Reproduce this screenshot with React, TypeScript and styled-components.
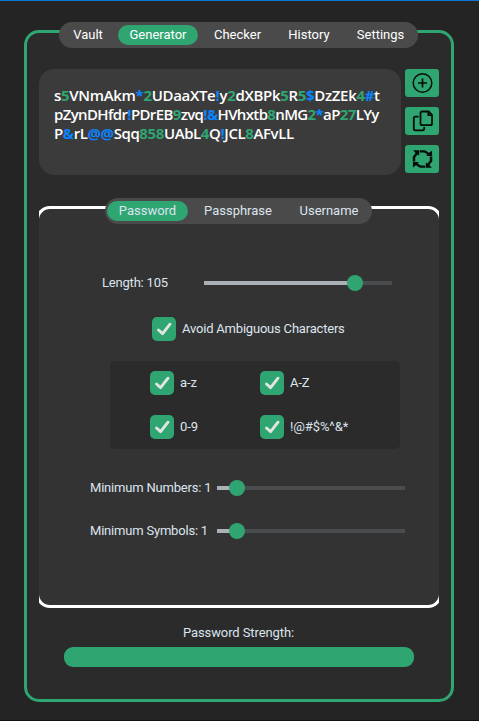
import React from "react";
import styled, { createGlobalStyle } from "styled-components";

const GREEN = "#2fa572";
const BLUE = "#0a84ff";

const GlobalStyle = createGlobalStyle`
  * { box-sizing: border-box; }
  body { margin: 0; background: #242424; }
`;

const Window = styled.main`
  width: 479px;
  height: 721px;
  padding: 21px 25px 18px 24px;
  border-top: 1px solid #0a78d4;
  border-bottom: 1px solid #101010;
  background: #242424;
  color: #dce4ee;
  font: 13px/16px Roboto, sans-serif;
`;

const Frame = styled.section`
  height: 672px;
  margin-top: 8px;
  padding: 0 12px;
  border: 3px solid ${GREEN};
  border-radius: 15px;
  background: #2b2b2b;
  display: flex;
  flex-direction: column;
`;

const TabBar = styled.nav<{ $width: number; $lift: number }>`
  display: flex;
  justify-content: center;
  gap: 4px;
  flex: none;
  align-self: flex-start;
  position: relative;
  width: ${(p) => p.$width}px;
  height: 26px;
  margin-top: -${(p) => p.$lift}px;
  padding: 3px 0;
  border-radius: 13px;
  background: #4a4a4a;
`;

const Tab = styled.button<{ $active?: boolean; $width: number }>`
  width: ${(p) => p.$width}px;
  height: 20px;
  padding: 0;
  border: 0;
  border-radius: 10px;
  background: ${(p) => (p.$active ? GREEN : "transparent")};
  color: inherit;
  font: inherit;
  line-height: 20px;
  white-space: nowrap;
`;

const MainTabs = styled(TabBar)`
  margin-left: 20px;
  padding-left: 1px;
  color: #fff;
`;

const OutputRow = styled.div`
  display: flex;
  gap: 4px;
  margin-top: 21px;
  height: 106px;
`;

const Output = styled.div`
  width: 362px;
  padding: 17px 15px;
  border-radius: 15px;
  background: #3b3b3b;
  color: #fff;
  font: 600 15px/19px "Open Sans", sans-serif;
`;

const OutputLine = styled.div<{ $spacing: number }>`
  white-space: nowrap;
  letter-spacing: ${(p) => p.$spacing}px;
`;

const Digit = styled.span`
  color: ${GREEN};
  font-weight: 700;
`;

const Special = styled.span`
  color: ${BLUE};
  font-weight: 700;
`;

const Actions = styled.div`
  display: flex;
  flex-direction: column;
  gap: 10px;
`;

const ActionButton = styled.button`
  display: grid;
  place-items: center;
  width: 34px;
  height: 28px;
  padding: 0;
  border: 0;
  border-radius: 3px;
  background: ${GREEN};
  color: #080d0a;
`;

const PanelClip = styled.div`
  width: 400px;
  height: 402px;
  margin-top: 31px;
  overflow: hidden;
  flex: none;
`;

const Panel = styled.div`
  height: 402px;
  margin: 0 -3px;
  padding-top: 62px;
  border: 3px solid #fff;
  border-radius: 14px;
  background: #333;
  display: flex;
  flex-direction: column;
`;

const PanelTabs = styled(TabBar)`
  margin-left: 66px;
`;

const Setting = styled.div<{ $indent: number; $label: number; $top?: number }>`
  display: grid;
  grid-template-columns: ${(p) => p.$label}px 188px;
  align-items: center;
  height: 24px;
  margin-left: ${(p) => p.$indent}px;
  margin-top: ${(p) => p.$top ?? 0}px;
  white-space: nowrap;
  letter-spacing: -0.2px;
`;

const Track = styled.div<{ $value: number }>`
  height: 4px;
  display: flex;
  align-items: center;
  background: linear-gradient(to right, #aab0b5 ${(p) => p.$value}px, #4a4d50 ${(p) => p.$value}px);
`;

const Thumb = styled.span<{ $value: number }>`
  flex: none;
  width: 16px;
  height: 16px;
  margin-left: ${(p) => p.$value - 8}px;
  border-radius: 50%;
  background: ${GREEN};
`;

const AmbiguousRow = styled.div`
  margin: 22px 0 0 113px;
  letter-spacing: -0.2px;
`;

const CheckLabel = styled.label`
  display: flex;
  align-items: center;
  gap: 6px;
  height: 24px;
  white-space: nowrap;
`;

const CheckBox = styled.span`
  display: grid;
  place-items: center;
  width: 24px;
  height: 24px;
  border-radius: 5px;
  background: ${GREEN};
`;

const CharacterSets = styled.div`
  display: grid;
  grid-template-columns: 110px 130px;
  row-gap: 20px;
  width: 290px;
  height: 88px;
  margin: 20px 0 0 71px;
  padding: 10px 10px 10px 40px;
  border-radius: 5px;
  background: #2b2b2b;
  letter-spacing: -0.1px;
`;

const StrengthLabel = styled.div`
  margin-top: 401px;
  padding-right: 1px;
  text-align: center;
  letter-spacing: -0.1px;
`;

const StrengthBar = styled.div`
  width: 350px;
  height: 20px;
  margin: 6px 0 0 25px;
  border-radius: 9px;
  background: ${GREEN};
`;

const passwordLines = [
  { text: "s5VNmAkm*2UDaaXTe!y2dXBPk5R5$DzZEk4#t", spacing: -0.32 },
  { text: "pZynDHfdr!PDrEB9zvq!&HVhxtb8nMG2*aP27LYy", spacing: -0.64 },
  { text: "P&rL@@Sqq858UAbL4Q!JCL8AFvLL", spacing: -0.4 },
];

function PasswordText({ text }: { text: string }) {
  return (
    <>
      {(text.match(/[A-Za-z]+|[0-9]+|[^A-Za-z0-9]+/g) ?? []).map((part, i) =>
        /^[0-9]/.test(part) ? (
          <Digit key={i}>{part}</Digit>
        ) : /^[A-Za-z]/.test(part) ? (
          part
        ) : (
          <Special key={i}>{part}</Special>
        )
      )}
    </>
  );
}

function Check({ label }: { label: string }) {
  return (
    <CheckLabel>
      <CheckBox>
        <svg width="24" height="24" viewBox="0 0 24 24" fill="none">
          <path d="M6.5 13 10.6 16.6 18 7.2" stroke="#e2e6e3" strokeWidth="2.9" strokeLinecap="round" strokeLinejoin="round" />
        </svg>
      </CheckBox>
      {label}
    </CheckLabel>
  );
}

function Slider({ value }: { value: number }) {
  return (
    <Track $value={value}>
      <Thumb $value={value} />
    </Track>
  );
}

function AddIcon() {
  return (
    <svg width="22" height="22" viewBox="0 0 22 22" fill="none" stroke="currentColor">
      <circle cx="11.5" cy="11" r="9.3" strokeWidth="1.5" />
      <path d="M11.5 6.5v9M7 11h9" strokeWidth="1.7" />
    </svg>
  );
}

function CopyIcon() {
  return (
    <svg width="24" height="24" viewBox="0 0 24 24" fill="none" stroke="currentColor" strokeWidth="1.8" strokeLinejoin="round">
      <path d="M12.2 2.5h6.4l3.4 3.4v8.6q0 1.7-1.7 1.7h-8.1q-1.7 0-1.7-1.7V4.2q0-1.7 1.7-1.7z" />
      <path d="M18.3 2.5v3.7H22" />
      <path d="M8.6 7.6H5.4Q3.8 7.6 3.8 9.2v10.5q0 1.6 1.6 1.6h7.1q1.7 0 1.7-1.7V18" />
    </svg>
  );
}

function RegenerateIcon() {
  return (
    <svg width="22" height="20" viewBox="0 0 22 20" fill="currentColor">
      {[0, 90, 180, 270].map((angle) => (
        <g key={angle} transform={`translate(11.5 10) scale(1.04 0.94) rotate(${angle})`}>
          <path d="M-2.7-9.4H2.4L6.3-6.7 9.2-9V-3.2H3.6L4.7-4.8 1.6-7H-2.7z" />
        </g>
      ))}
    </svg>
  );
}

export default function App() {
  return (
    <>
      <GlobalStyle />
      <Window>
        <Frame>
          <MainTabs $width={359} $lift={11}>
            <Tab $width={52}>Vault</Tab>
            <Tab $width={80} $active>Generator</Tab>
            <Tab $width={71}>Checker</Tab>
            <Tab $width={64}>History</Tab>
            <Tab $width={71}>Settings</Tab>
          </MainTabs>
          <OutputRow>
            <Output>
              {passwordLines.map((line) => (
                <OutputLine key={line.text} $spacing={line.spacing}>
                  <PasswordText text={line.text} />
                </OutputLine>
              ))}
            </Output>
            <Actions>
              <ActionButton aria-label="Add"><AddIcon /></ActionButton>
              <ActionButton aria-label="Copy"><CopyIcon /></ActionButton>
              <ActionButton aria-label="Regenerate"><RegenerateIcon /></ActionButton>
            </Actions>
          </OutputRow>
          <PanelClip>
            <Panel>
              <Setting $indent={63} $label={102}>
                <span>Length: 105</span>
                <Slider value={151} />
              </Setting>
              <AmbiguousRow><Check label="Avoid Ambiguous Characters" /></AmbiguousRow>
              <CharacterSets>
                <Check label="a-z" />
                <Check label="A-Z" />
                <Check label="0-9" />
                <Check label="!@#$%^&*" />
              </CharacterSets>
              <Setting $indent={51} $label={127} $top={27}>
                <span>Minimum Numbers: 1</span>
                <Slider value={20} />
              </Setting>
              <Setting $indent={51} $label={127} $top={19}>
                <span>Minimum Symbols: 1</span>
                <Slider value={20} />
              </Setting>
            </Panel>
          </PanelClip>
          <PanelTabs $width={267} $lift={410}>
            <Tab $width={81} $active>Password</Tab>
            <Tab $width={92}>Passphrase</Tab>
            <Tab $width={82}>Username</Tab>
          </PanelTabs>
          <StrengthLabel>Password Strength:</StrengthLabel>
          <StrengthBar />
        </Frame>
      </Window>
    </>
  );
}
